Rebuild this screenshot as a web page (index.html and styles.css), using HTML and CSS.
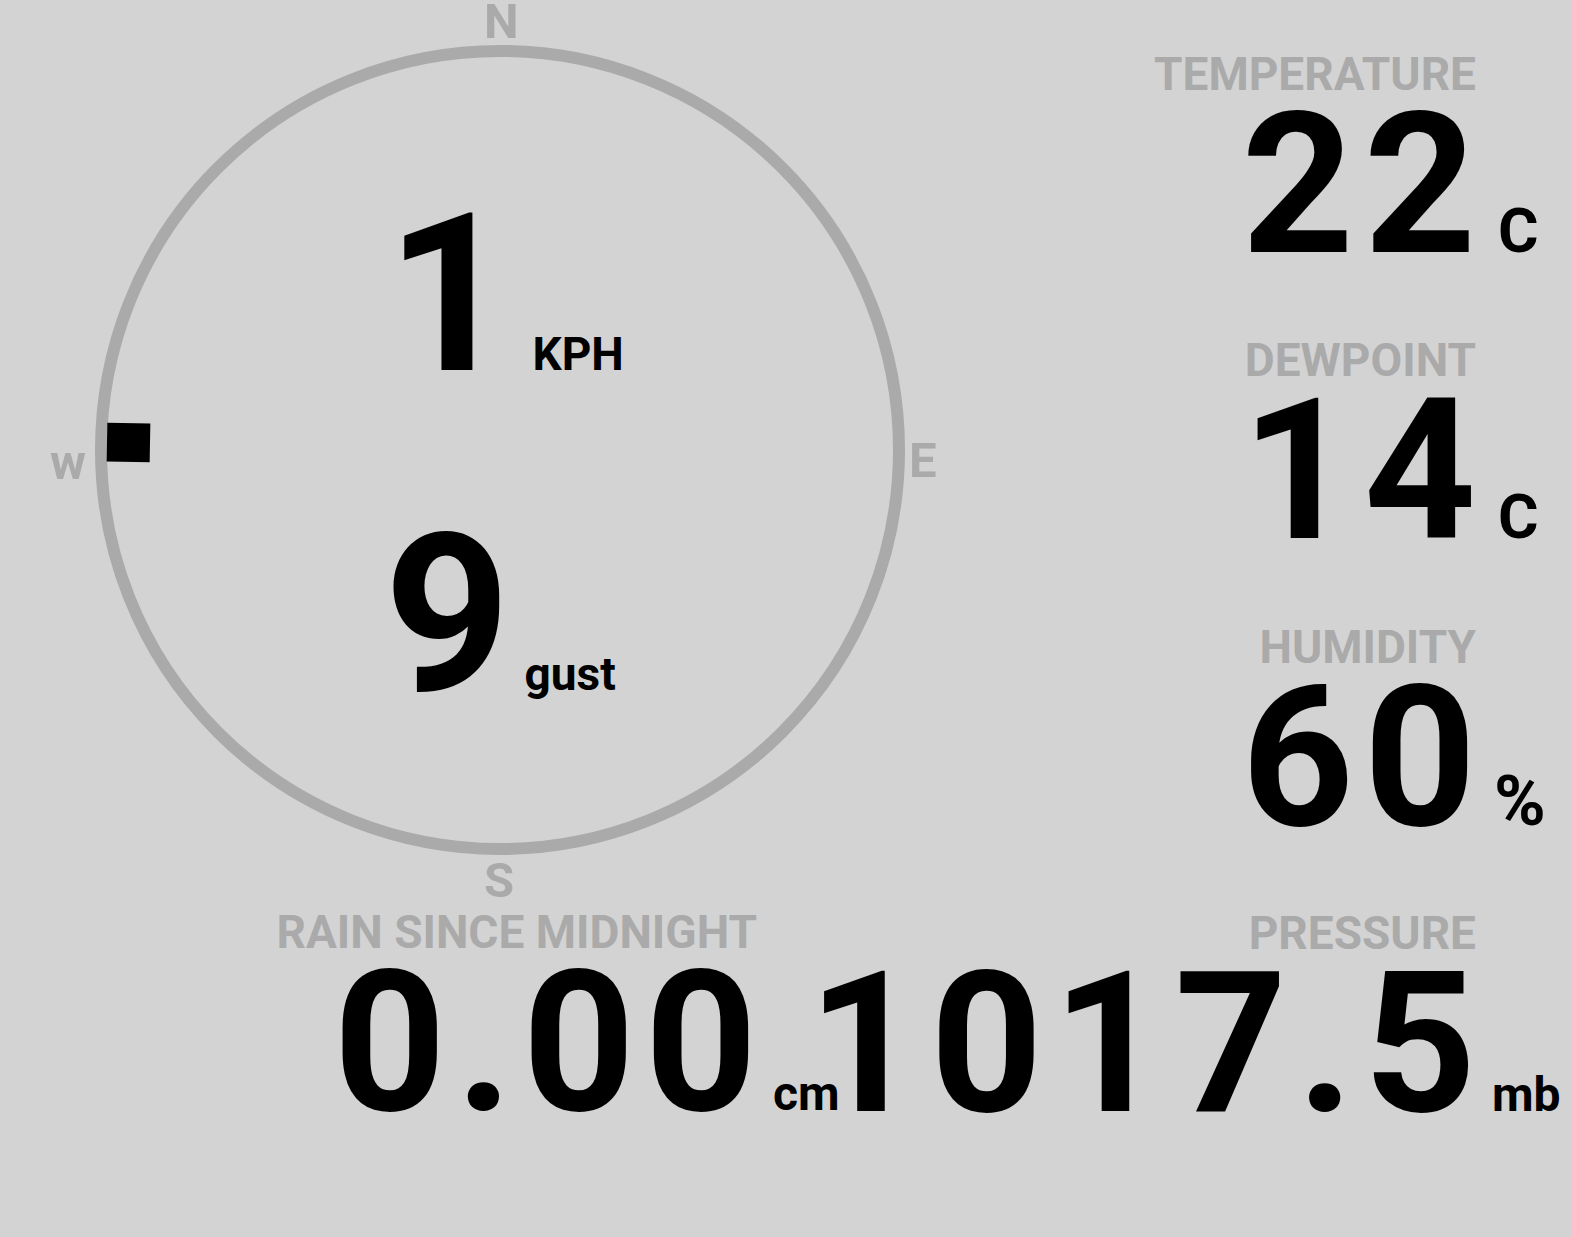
FILE: index.html
```html
<!DOCTYPE html>
<html lang="en">
<head>
  <meta charset="UTF-8">
  <meta name="viewport" content="width=device-width, initial-scale=1">
  <title>Weather Station</title>
  <link rel="stylesheet" href="styles.css">
</head>
<body>
  <main class="station">
    <section class="left">
      <div class="compass">
        <span class="point north">N</span>
        <span class="point east">E</span>
        <span class="point south">S</span>
        <span class="point west">w</span>
        <div class="dial">
          <div class="speed wind">
            <span class="speed-num">1</span>
            <span class="speed-unit">KPH</span>
          </div>
          <div class="speed gust">
            <span class="speed-num">9</span>
            <span class="speed-unit">gust</span>
          </div>
        </div>
        <div class="vane"></div>
      </div>
      <div class="stat rain">
        <div class="label">RAIN SINCE MIDNIGHT</div>
        <div class="reading"><span class="num">0.00</span><span class="unit">cm</span></div>
      </div>
    </section>
    <section class="stats">
      <div class="stat">
        <div class="label">TEMPERATURE</div>
        <div class="reading"><span class="num">22</span><span class="unit big">C</span></div>
      </div>
      <div class="stat">
        <div class="label">DEWPOINT</div>
        <div class="reading"><span class="num">14</span><span class="unit big">C</span></div>
      </div>
      <div class="stat">
        <div class="label">HUMIDITY</div>
        <div class="reading"><span class="num">60</span><span class="unit big pct">%</span></div>
      </div>
      <div class="stat">
        <div class="label">PRESSURE</div>
        <div class="reading"><span class="num">1017.5</span><span class="unit">mb</span></div>
      </div>
    </section>
  </main>
</body>
</html>
```

FILE: styles.css
```css
:root {
  --bg: #d3d3d3;
  --dim: #aaaaaa;
  --ink: #000000;
}
* { box-sizing: border-box; }
body {
  margin: 0;
  background: var(--bg);
  color: var(--ink);
  font-family: Roboto, 'Liberation Sans', sans-serif;
  font-weight: 700;
}
.station {
  display: grid;
  grid-template-columns: 1000px minmax(0, 1fr);
  height: 1237px;
  overflow: hidden;
}

/* wind compass */
.compass {
  position: relative;
  height: 899px;
  display: flex;
  justify-content: center;
  align-items: center;
}
.dial {
  width: 810px;
  height: 810px;
  border: 12px solid var(--dim);
  border-radius: 50%;
  display: flex;
  flex-direction: column;
  align-items: center;
  justify-content: center;
  gap: 100px;
  padding-top: 11px;
}
.speed {
  display: flex;
  align-items: baseline;
  line-height: 1;
}
.speed-num { font-size: 220px; }
.speed-unit {
  font-size: 46px;
  margin-left: 14px;
}
.wind .speed-num { margin-left: 10px; }
.wind .speed-unit { margin-left: 20px; }
.point {
  position: absolute;
  font-size: 49px;
  line-height: 0.9;
  color: var(--dim);
}
.north { top: 0; left: 484px; }
.east { top: 439px; left: 909px; }
.south { top: 859px; left: 484px; }
.west { top: 441px; left: 50px; }
.vane {
  position: absolute;
  left: 107px;
  top: 423px;
  width: 43px;
  height: 39px;
  background: var(--ink);
  transform: rotate(1deg);
}

/* readings */
.stats {
  display: flex;
  flex-direction: column;
  gap: 64px;
  padding-top: 51px;
  padding-right: 15px;
}
.stat {
  display: flex;
  flex-direction: column;
  align-items: flex-end;
}
.rain {
  margin-top: 10px;
  margin-right: 163px;
}
.label {
  font-size: 46px;
  line-height: 1;
  color: var(--dim);
  margin-right: 80px;
  white-space: nowrap;
}
.reading {
  display: flex;
  align-items: baseline;
  line-height: 0.9;
  white-space: nowrap;
}
.num {
  font-size: 196px;
  letter-spacing: 0.05em;
}
.unit {
  width: 70px;
  padding-left: 6px;
  font-size: 48px;
}
.unit.big {
  padding-left: 12px;
  font-size: 62px;
}
.unit.pct {
  padding-left: 8px;
  font-size: 70px;
}
```
